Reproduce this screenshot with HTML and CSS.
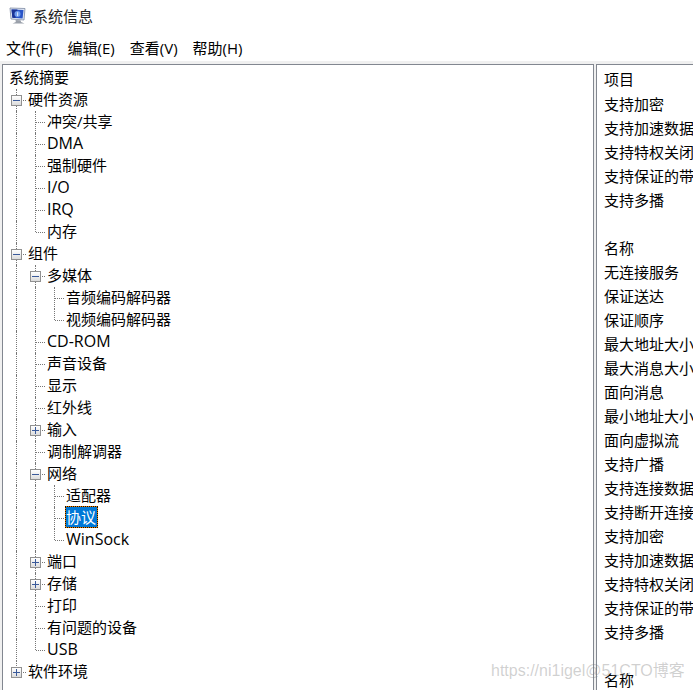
FILE: index.html
```html
<!DOCTYPE html>
<html lang="zh">
<head>
<meta charset="utf-8">
<title>系统信息</title>
<link rel="stylesheet" href="styles.css">
</head>
<body>
<header class="titlebar">
  <svg class="appicon" width="18" height="18" viewBox="0 0 18 18"><path d="M1 1l15 .5L15 13 2 12z" fill="#dfe6f2" stroke="#7d8aa3" stroke-width=".8"/><path d="M2.5 2.5l12 .4-.9 8.6-10.2-.8z" fill="#2a55c8"/><path d="M2.5 2.5h6l-2 8.4-3.1-.2z" fill="#1b3496"/><circle cx="8.5" cy="7" r="3" fill="#6f9df0"/><path d="M8.3 5.3h.8v3.6h-.8z" fill="#fff"/><path d="M6.5 13l5 .3.6 1.7 3.4 1.5H3.5l3.3-1.6z" fill="#9aa0aa"/></svg>
  <span>系统信息</span>
</header>
<nav class="menubar"><span>文件(F)</span><span>编辑(E)</span><span>查看(V)</span><span>帮助(H)</span></nav>
<main class="panes">
  <section class="tree">
    <div class="row"><span class="label">系统摘要</span></div>
    <div class="row"><i class="c tee"><b class="box minus"></b></i><span class="label">硬件资源</span></div>
    <div class="row"><i class="c v"></i><i class="c tee"></i><span class="label">冲突/共享</span></div>
    <div class="row"><i class="c v"></i><i class="c tee"></i><span class="label lat">DMA</span></div>
    <div class="row"><i class="c v"></i><i class="c tee"></i><span class="label">强制硬件</span></div>
    <div class="row"><i class="c v"></i><i class="c tee"></i><span class="label lat">I/O</span></div>
    <div class="row"><i class="c v"></i><i class="c tee"></i><span class="label lat">IRQ</span></div>
    <div class="row"><i class="c v"></i><i class="c end"></i><span class="label">内存</span></div>
    <div class="row"><i class="c tee"><b class="box minus"></b></i><span class="label">组件</span></div>
    <div class="row"><i class="c v"></i><i class="c tee"><b class="box minus"></b></i><span class="label">多媒体</span></div>
    <div class="row"><i class="c v"></i><i class="c v"></i><i class="c tee"></i><span class="label">音频编码解码器</span></div>
    <div class="row"><i class="c v"></i><i class="c v"></i><i class="c end"></i><span class="label">视频编码解码器</span></div>
    <div class="row"><i class="c v"></i><i class="c tee"></i><span class="label lat">CD-ROM</span></div>
    <div class="row"><i class="c v"></i><i class="c tee"></i><span class="label">声音设备</span></div>
    <div class="row"><i class="c v"></i><i class="c tee"></i><span class="label">显示</span></div>
    <div class="row"><i class="c v"></i><i class="c tee"></i><span class="label">红外线</span></div>
    <div class="row"><i class="c v"></i><i class="c tee"><b class="box plus"></b></i><span class="label">输入</span></div>
    <div class="row"><i class="c v"></i><i class="c tee"></i><span class="label">调制解调器</span></div>
    <div class="row"><i class="c v"></i><i class="c tee"><b class="box minus"></b></i><span class="label">网络</span></div>
    <div class="row"><i class="c v"></i><i class="c v"></i><i class="c tee"></i><span class="label">适配器</span></div>
    <div class="row"><i class="c v"></i><i class="c v"></i><i class="c tee"></i><span class="label selected">协议</span></div>
    <div class="row"><i class="c v"></i><i class="c v"></i><i class="c end"></i><span class="label lat">WinSock</span></div>
    <div class="row"><i class="c v"></i><i class="c tee"><b class="box plus"></b></i><span class="label">端口</span></div>
    <div class="row"><i class="c v"></i><i class="c tee"><b class="box plus"></b></i><span class="label">存储</span></div>
    <div class="row"><i class="c v"></i><i class="c tee"></i><span class="label">打印</span></div>
    <div class="row"><i class="c v"></i><i class="c tee"></i><span class="label">有问题的设备</span></div>
    <div class="row"><i class="c v"></i><i class="c end"></i><span class="label lat">USB</span></div>
    <div class="row"><i class="c end"><b class="box plus"></b></i><span class="label">软件环境</span></div>
  </section>
  <section class="detail">
    <div class="item head">项目</div>
    <div class="item">支持加密</div>
    <div class="item">支持加速数据</div>
    <div class="item">支持特权关闭</div>
    <div class="item">支持保证的带</div>
    <div class="item">支持多播</div>
    <div class="item"></div>
    <div class="item">名称</div>
    <div class="item">无连接服务</div>
    <div class="item">保证送达</div>
    <div class="item">保证顺序</div>
    <div class="item">最大地址大小</div>
    <div class="item">最大消息大小</div>
    <div class="item">面向消息</div>
    <div class="item">最小地址大小</div>
    <div class="item">面向虚拟流</div>
    <div class="item">支持广播</div>
    <div class="item">支持连接数据</div>
    <div class="item">支持断开连接</div>
    <div class="item">支持加密</div>
    <div class="item">支持加速数据</div>
    <div class="item">支持特权关闭</div>
    <div class="item">支持保证的带</div>
    <div class="item">支持多播</div>
    <div class="item"></div>
    <div class="item">名称</div>
  </section>
  <div class="watermark">https://ni1igel@51CTO博客</div>
</main>
</body>
</html>
```
FILE: styles.css
```css
html, body { margin: 0; height: 100%; overflow: hidden; }
body {
  width: 693px;
  height: 690px;
  background: #fff;
  font-family: "Open Sans", "Noto Sans CJK SC", sans-serif;
  font-size: 15px;
  color: #000;
  display: flex;
  flex-direction: column;
}
.titlebar {
  height: 32px;
  flex: none;
  display: flex;
  align-items: center;
  gap: 6px;
  padding: 0 0 1px 9px;
  box-sizing: border-box;
  font-size: 15px;
  color: #222;
}
.menubar {
  height: 29px;
  flex: none;
  display: flex;
  align-items: center;
  gap: 15px;
  padding: 2px 0 0 6px;
  box-sizing: border-box;
  font-size: 15px;
}
.panes {
  position: relative;
  flex: 1;
  min-height: 0;
  display: flex;
  gap: 2px;
  background: #f0f0f0;
  padding: 3px 0 0 2px;
  overflow: hidden;
}
.tree {
  width: 592px;
  flex: none;
  box-sizing: border-box;
  background: #fff;
  border: 1px solid #828790;
  border-bottom: 0;
  padding: 2px 0 0 4px;
}
.detail {
  flex: 1;
  background: #fff;
  border: 1px solid #828790;
  border-bottom: 0;
  border-right: 0;
  padding: 3px 0 0 7px;
  white-space: nowrap;
  overflow: hidden;
}
.row {
  height: 22px;
  display: flex;
  align-items: flex-start;
}
.c {
  position: relative;
  width: 19px;
  height: 22px;
  flex: none;
}
.c.v::before, .c.tee::before, .c.end::before {
  content: "";
  position: absolute;
  left: 9px;
  top: 0;
  border-left: 1px dotted #777;
}
.c.v::before, .c.tee::before { bottom: 0; }
.c.end::before { height: 11px; }
.c.tee::after, .c.end::after {
  content: "";
  position: absolute;
  left: 10px;
  width: 9px;
  top: 11px;
  border-top: 1px dotted #777;
}
.box {
  position: absolute;
  z-index: 1;
  left: 4px;
  top: 6px;
  width: 9px;
  height: 9px;
  border: 1px solid #919191;
  background: linear-gradient(#fff, #dcdcdc);
}
.box::before {
  content: "";
  position: absolute;
  left: 1px;
  right: 1px;
  top: 4px;
  height: 1px;
  background: #3a5a9a;
}
.box.plus::after {
  content: "";
  position: absolute;
  top: 1px;
  bottom: 1px;
  left: 4px;
  width: 1px;
  background: #3a5a9a;
}
.label {
  height: 22px;
  line-height: 22px;
  margin: -1px 0 0 1px;
  padding: 0 2px 0 1px;
  white-space: nowrap;
}
.label.lat { font-size: 16px; }
.label.selected {
  background: #0078d7;
  color: #fff;
  outline: 1px dotted #1a1000;
  outline-offset: -1px;
  box-shadow: inset 0 0 0 1px #f08000;
}
.item {
  height: 24px;
  line-height: 24px;
}
.item.head { line-height: 22px; }
.watermark {
  position: absolute;
  left: 491px;
  top: 596px;
  color: rgba(120, 120, 120, 0.35);
  font-family: "Liberation Sans", "Noto Sans CJK SC", sans-serif;
  font-size: 16px;
  white-space: nowrap;
}
```
